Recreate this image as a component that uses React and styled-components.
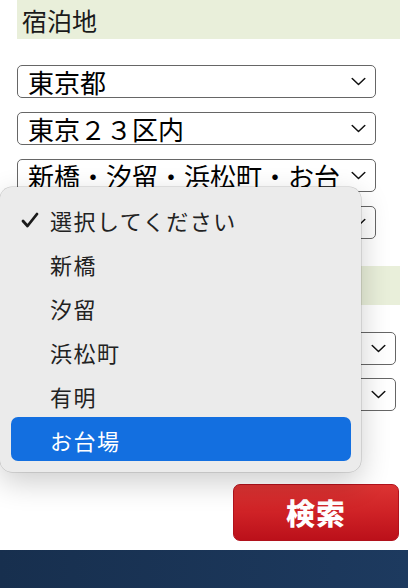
import React from "react";
import styled, { createGlobalStyle } from "styled-components";

const Global = createGlobalStyle`
  html, body { margin: 0; padding: 0; background: #fff; }
  body { font-family: "Noto Sans CJK JP", "Noto Sans", sans-serif; color: #111; }
  * { box-sizing: border-box; }
`;

const Page = styled.div`
  position: relative;
  width: 408px;
  height: 588px;
  overflow: hidden;
  display: flex;
  flex-direction: column;
`;

const Content = styled.div`
  padding: 0 8px 0 17px;
  display: flex;
  flex-direction: column;
  flex: 1;
`;

const Band = styled.div`
  height: 39px;
  background: #e9efda;
  display: flex;
  align-items: center;
  padding-left: 5px;
  font-size: 25px;
  font-weight: 400;
  color: #1a1a1a;
  margin-top: ${(p) => p.$top || 0}px;
`;

const SelectList = styled.div`
  display: flex;
  flex-direction: column;
  gap: ${(p) => p.$gap}px;
  margin-top: ${(p) => p.$top}px;
  width: ${(p) => p.$width}px;
  align-self: ${(p) => (p.$wide ? "flex-end" : "flex-start")};
  margin-right: ${(p) => (p.$wide ? "4px" : "0")};
`;

const SelectBox = styled.div`
  height: 33px;
  border: 1px solid #666;
  border-radius: 5px;
  background: #fff;
  display: flex;
  align-items: center;
  padding: 0 9px 0 10px;
  gap: 12px;
  font-size: 26px;
  color: #000;
  overflow: hidden;
`;

const SelectText = styled.span`
  flex: 1;
  white-space: nowrap;
  overflow: hidden;
  line-height: 31px;
`;

const Chevron = () => (
  <svg width="15" height="9" viewBox="0 0 15 9" style={{ flex: "none" }}>
    <path d="M1.2 1.5 L7.5 7.5 L13.8 1.5" fill="none" stroke="#111" strokeWidth="1.5" strokeLinecap="round" strokeLinejoin="round" />
  </svg>
);

const Select = ({ children }) => (
  <SelectBox>
    <SelectText>{children}</SelectText>
    <Chevron />
  </SelectBox>
);

const ButtonRow = styled.div`
  display: flex;
  justify-content: flex-end;
  margin-top: 73px;
  margin-right: 1px;
`;

const SearchButton = styled.button`
  width: 166px;
  height: 57px;
  border-radius: 7px;
  border: 1px solid #b1121c;
  background: linear-gradient(to bottom, #dc3433 0%, #cf2226 50%, #bb101a 100%);
  color: #fff;
  font-family: "Noto Sans CJK JP", sans-serif;
  font-weight: 900;
  font-size: 29px;
  letter-spacing: 1px;
  display: flex;
  align-items: center;
  justify-content: center;
  padding: 0 0 2px;
`;

const Footer = styled.div`
  height: 40px;
  margin: 9px -8px 0 -17px;
  background: linear-gradient(to right, #172f4e, #1d3a5f);
`;

const Popup = styled.div`
  position: absolute;
  left: 0;
  top: 187px;
  width: 361px;
  height: 285px;
  background: #ebebeb;
  border-radius: 12px;
  box-shadow: 0 0 0 0.5px rgba(0,0,0,0.2), 0 10px 30px rgba(0,0,0,0.2);
  padding: 10px 10px 10px 11px;
  display: flex;
  flex-direction: column;
`;

const Option = styled.div`
  height: 44px;
  display: flex;
  align-items: center;
  border-radius: 7px;
  padding: 2px 0 0 10px;
  font-size: 22px;
  color: ${(p) => (p.$active ? "#fff" : "#222")};
  background: ${(p) => (p.$active ? "#136fe0" : "transparent")};
  letter-spacing: 1.5px;
`;

const CheckSlot = styled.span`
  width: 29px;
  flex: none;
  display: flex;
  align-items: center;
`;

const Check = () => (
  <svg width="18" height="16" viewBox="0 0 18 16">
    <path d="M2 9 L6.5 14 L16 2" fill="none" stroke="#1a1a1a" strokeWidth="2.8" strokeLinecap="round" strokeLinejoin="round" />
  </svg>
);

const options = ["選択してください", "新橋", "汐留", "浜松町", "有明", "お台場"];

export default function App() {
  return (
    <>
      <Global />
      <Page>
        <Content>
          <Band>宿泊地</Band>
          <SelectList $gap={14} $top={26} $width={359}>
            <Select>東京都</Select>
            <Select>東京２３区内</Select>
            <Select>新橋・汐留・浜松町・お台場</Select>
            <Select>選択してください</Select>
          </SelectList>
          <Band $top={27}>人数</Band>
          <SelectList $gap={13} $top={27} $width={240} $wide>
            <Select>1名</Select>
            <Select>1室</Select>
          </SelectList>
          <ButtonRow>
            <SearchButton>検索</SearchButton>
          </ButtonRow>
          <Footer />
        </Content>
        <Popup>
          {options.map((o, i) => (
            <Option key={o} $active={i === options.length - 1}>
              <CheckSlot>{i === 0 ? <Check /> : null}</CheckSlot>
              {o}
            </Option>
          ))}
        </Popup>
      </Page>
    </>
  );
}
